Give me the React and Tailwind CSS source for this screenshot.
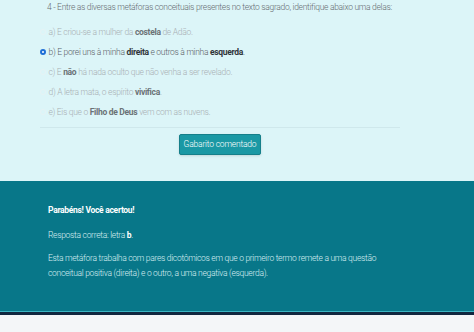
const options = [
  { key: "a", parts: ["a) E criou-se a mulher da ", { b: "costela" }, " de Adão."] },
  { key: "b", parts: ["b) E porei uns à minha ", { b: "direita" }, " e outros à minha ", { b: "esquerda" }, "."], checked: true },
  { key: "c", parts: ["c) E ", { b: "não" }, " há nada oculto que não venha a ser revelado."] },
  { key: "d", parts: ["d) A letra mata, o espírito ", { b: "vivifica" }, "."] },
  { key: "e", parts: ["e) Eis que o ", { b: "Filho de Deus" }, " vem com as nuvens."] },
];

const Option = ({ parts, checked }) => (
  <div className="flex items-center h-[20px]">
    <span
      className={
        checked
          ? "w-[6px] h-[6px] rounded-full border-[2px] border-[#1f6fd6] bg-white mr-[3px] ml-[-0.5px]"
          : "w-[6px] h-[6px] rounded-full border border-[#e6f3f5] mr-[3px] ml-[-0.5px]"
      }
    />
    <span className={checked ? "text-[#5a6066]" : "text-[#a9b0b4]"}>
      {parts.map((p, i) =>
        typeof p === "string" ? (
          <span key={i}>{p}</span>
        ) : (
          <strong key={i} className={checked ? "font-bold text-[#2f3438]" : "font-bold text-[#6b7276]"}>
            {p.b}
          </strong>
        )
      )}
    </span>
  </div>
);

export default function App() {
  return (
    <div className="w-[474px] h-[332px] overflow-hidden font-['Roboto',sans-serif] font-light text-[8.5px] tracking-[-0.3px]">
      <section className="bg-[#dcf5f8] h-[181px] pl-[40px] pr-[74px]">
        <p className="text-[#676d72] pl-[7px] pt-[1px] leading-[12px] whitespace-nowrap">
          4 - Entre as diversas metáforas conceituais presentes no texto sagrado, identifique abaixo uma delas:
        </p>
        <div className="mt-[9px]">
          {options.map((o) => (
            <Option key={o.key} {...o} />
          ))}
        </div>
        <div className="border-t border-[#cfe8ec] mt-[5px] pt-[6px] flex justify-center">
          <button className="bg-[#1a98a4] border border-[#157f8a] rounded-[2px] text-white font-light text-[8.5px] tracking-[-0.2px] w-[82px] h-[21px] shadow-sm">
            Gabarito comentado
          </button>
        </div>
      </section>
      <section className="bg-[#087789] h-[130px] pl-[48px] pt-[22px] text-white">
        <p className="font-bold leading-[15px]">Parabéns! Você acertou!</p>
        <p className="mt-[10px] leading-[15px] text-[#d9eef1]">
          Resposta correta: letra <strong className="font-bold text-white">b</strong>.
        </p>
        <p className="mt-[8px] leading-[15px] text-[#d9eef1] w-[345px]">
          Esta metáfora trabalha com pares dicotômicos em que o primeiro termo remete a uma questão conceitual positiva (direita) e o outro, a uma negativa (esquerda).
        </p>
      </section>
      <div className="h-[1px] bg-[#3ab4c2]" />
      <div className="h-[3px] bg-[#10263f]" />
      <div className="h-[17px] bg-[#f4f6f8]" />
    </div>
  );
}
